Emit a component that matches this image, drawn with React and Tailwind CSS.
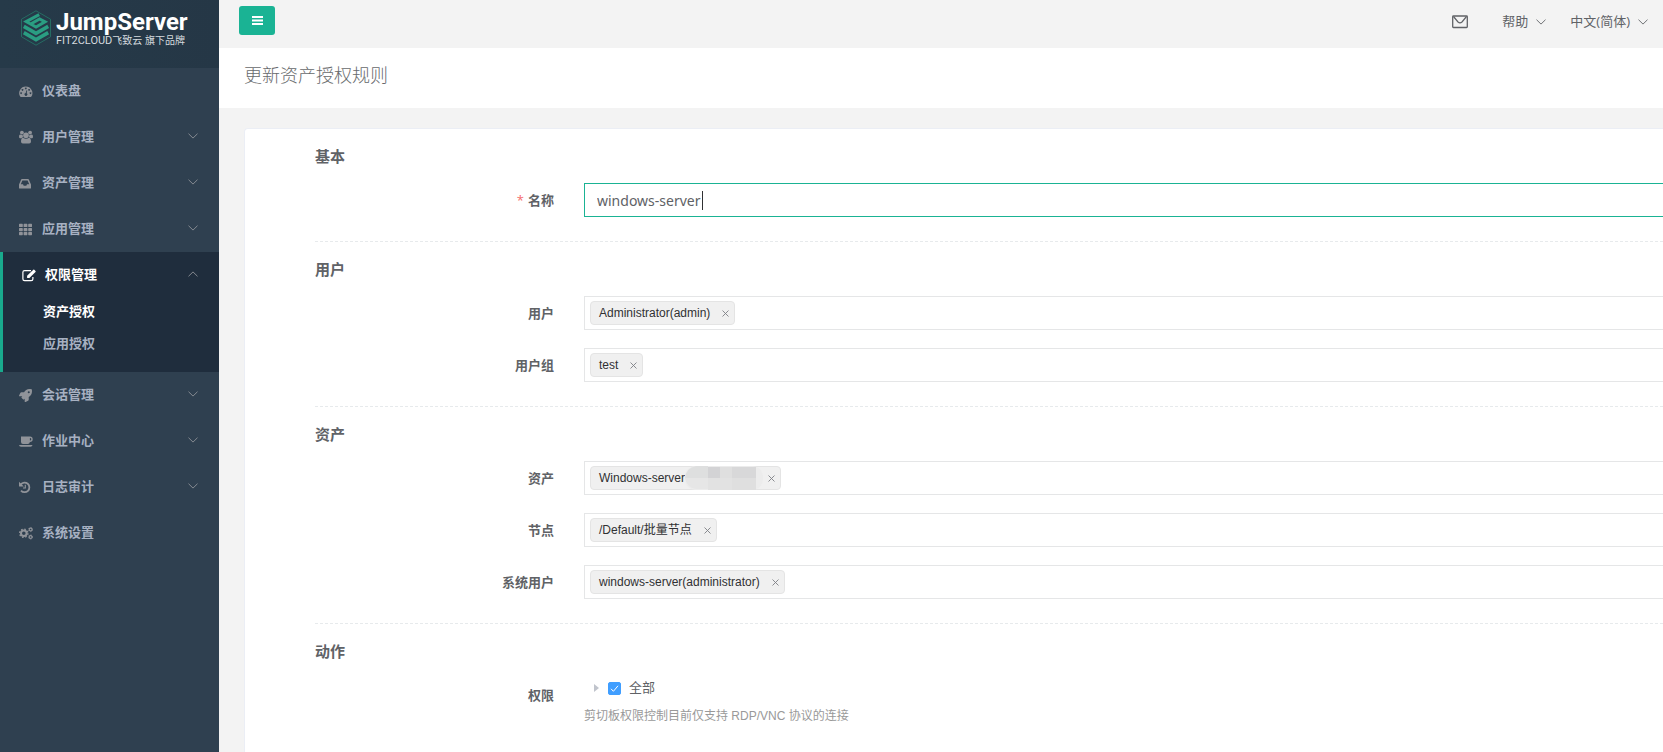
import React, { useState } from 'react';
import { FaTh, FaRocket } from 'react-icons/fa';

const Glyph = ({ className = '', children }) => (
  <svg viewBox="0 0 14 14" className={`w-[14px] h-[14px] ${className}`} fill="currentColor">
    {children}
  </svg>
);

const DashboardIcon = ({ className }) => (
  <Glyph className={className}>
    <path
      fillRule="evenodd"
      d="M6.8 2.5 A6.6 6.6 0 0 0 1.2 12.6 Q1.4 13 1.8 13 H11.8 Q12.2 13 12.4 12.6 A6.6 6.6 0 0 0 6.8 2.5 Z
        M2.1 8.2 a0.9 0.9 0 1 0 0.01 0 Z M3.5 4.9 a0.9 0.9 0 1 0 0.01 0 Z M6.8 3.4 a0.9 0.9 0 1 0 0.01 0 Z
        M10.1 4.9 a0.9 0.9 0 1 0 0.01 0 Z M11.5 8.2 a0.9 0.9 0 1 0 0.01 0 Z
        M7.5 6.2 L8.2 6.4 L7.7 9.2 A1.4 1.4 0 1 1 6.7 9 Z"
    />
  </Glyph>
);

const GroupIcon = ({ className }) => (
  <Glyph className={className}>
    <circle cx="2.9" cy="2.6" r="1.9" />
    <circle cx="11.1" cy="2.6" r="1.9" />
    <path d="M0 6.8 Q0 4.6 1.2 4.6 Q3 5.4 3.6 4.9 Q3.6 6.4 4.4 7.2 Q3 7.3 2.4 8.3 H1.2 Q0 8.3 0 6.8 Z" />
    <path d="M14 6.8 Q14 4.6 12.8 4.6 Q11 5.4 10.4 4.9 Q10.4 6.4 9.6 7.2 Q11 7.3 11.6 8.3 H12.8 Q14 8.3 14 6.8 Z" />
    <circle cx="7" cy="5.2" r="2.8" />
    <path d="M2 11.6 Q2 7.8 4.1 7.8 Q7 9.8 9.9 7.8 Q12 7.8 12 11.6 Q12 13.5 10.2 13.5 H3.8 Q2 13.5 2 11.6 Z" />
  </Glyph>
);

const InboxIcon = ({ className }) => (
  <Glyph className={className}>
    <path
      fillRule="evenodd"
      d="M2.9 3 H9.1 Q9.6 3 9.8 3.5 L12 8.6 V12 Q12 12.6 11.4 12.6 H0.6 Q0 12.6 0 12 V8.6 L2.2 3.5 Q2.4 3 2.9 3 Z
        M3.4 4.4 L1.8 8.3 H4 L4.7 9.8 H7.3 L8 8.3 H10.2 L8.6 4.4 Z"
    />
  </Glyph>
);

const EditIcon = ({ className }) => (
  <Glyph className={className}>
    <path
      d="M9 2.6 H2.6 Q0.9 2.6 0.9 4.3 V10.9 Q0.9 12.6 2.6 12.6 H9.2 Q10.9 12.6 10.9 10.9 V9"
      fill="none"
      stroke="currentColor"
      strokeWidth="1.2"
    />
    <path d="M11.3 1.7 Q11.8 1.2 12.3 1.7 L13.5 2.9 Q14 3.4 13.5 3.9 L7.4 10 H5.1 V7.8 Z" />
  </Glyph>
);

const CoffeeIcon = ({ className }) => (
  <Glyph className={className}>
    <path
      fillRule="evenodd"
      d="M2 2.5 H11 Q13.7 2.7 13.7 5.2 Q13.7 7.9 10.9 7.9 Q10.6 9.9 8.8 9.9 H4 Q2 9.9 2 7.9 Z
        M10.9 4 V6.6 Q12.3 6.6 12.3 5.2 Q12.3 4 10.9 4 Z"
    />
    <path d="M0 11 H13.5 Q13.3 12.7 11.5 12.7 H2 Q0.2 12.7 0 11 Z" />
  </Glyph>
);

const HistoryIcon = ({ className }) => (
  <Glyph className={className}>
    <path d="M1.8 4.4 A4.8 4.8 0 1 1 2 10.6" fill="none" stroke="currentColor" strokeWidth="1.8" />
    <path d="M0 1.8 L4.8 6.4 H0.5 Q0 6.4 0 5.9 Z" />
    <path d="M6.3 4.8 V8 H4" fill="none" stroke="currentColor" strokeWidth="1.1" />
  </Glyph>
);

// The dashed outer ring forms the teeth of each gear
const CogsIcon = ({ className }) => (
  <Glyph className={className}>
    <g fill="none" stroke="currentColor">
      <circle cx="4.8" cy="7.3" r="2.8" strokeWidth="2" />
      <circle cx="4.8" cy="7.3" r="4.1" strokeWidth="1.4" strokeDasharray="1.61 1.61" />
      <circle cx="11.6" cy="3.5" r="1.4" strokeWidth="1.1" />
      <circle cx="11.6" cy="3.5" r="2.1" strokeWidth="0.8" strokeDasharray="1.1 1.1" />
      <circle cx="11.6" cy="11" r="1.4" strokeWidth="1.1" />
      <circle cx="11.6" cy="11" r="2.1" strokeWidth="0.8" strokeDasharray="1.1 1.1" />
    </g>
  </Glyph>
);

const menuItems = [
  { label: '仪表盘', icon: DashboardIcon },
  { label: '用户管理', icon: GroupIcon, expandable: true },
  { label: '资产管理', icon: InboxIcon, expandable: true },
  { label: '应用管理', icon: FaTh, expandable: true },
  {
    label: '权限管理',
    icon: EditIcon,
    expandable: true,
    children: ['资产授权', '应用授权'],
  },
  { label: '会话管理', icon: FaRocket, expandable: true },
  { label: '作业中心', icon: CoffeeIcon, expandable: true },
  { label: '日志审计', icon: HistoryIcon, expandable: true },
  { label: '系统设置', icon: CogsIcon },
];

const Chevron = ({ up = false, className = '' }) => (
  <svg
    viewBox="0 0 10 6"
    className={`w-[10px] h-[6px] shrink-0 ${up ? 'rotate-180' : ''} ${className}`}
    fill="none"
    stroke="currentColor"
    strokeWidth="0.9"
  >
    <path d="M0.5 0.7 L5 5.1 L9.5 0.7" />
  </svg>
);

const Logo = () => (
  <a
    href="#home"
    className="h-[68px] flex items-start pl-[21px] pt-[10px] gap-[5px] bg-linear-to-r from-[#263a49] to-[#253746] text-white"
  >
    <svg viewBox="0 0 30 36" className="w-[30px] h-9 shrink-0" fill="none">
      <path d="M15 0.8 L29.5 9.2 V26.8 L15 35.2 L0.5 26.8 V9.2 Z" stroke="#25836f" strokeWidth="0.7" />
      <g stroke="#2a9d82" strokeWidth="3">
        <path d="M18.2 4.6 L5.2 11.6 L9.6 14 L18.6 9 L24 11.8 L15 17 L9.6 14" />
        <path d="M2.8 16.4 L15 23.4 L27.2 16.4" strokeWidth="3.6" />
        <path d="M2.8 22.6 L15 29.6 L27.2 22.6" strokeWidth="3.6" />
      </g>
    </svg>
    <span className="flex flex-col whitespace-nowrap">
      <span className="font-['Roboto',sans-serif] font-bold text-2xl leading-6">JumpServer</span>
      <span className="text-[10px] leading-[14px] text-[#d5dbdf] font-['Liberation_Sans','Noto_Sans_CJK_SC',sans-serif]">
        <span className="font-['Roboto',sans-serif] text-[11px]">FIT2CLOUD</span>飞致云 旗下品牌
      </span>
    </span>
  </a>
);

const MenuItem = ({ item }) => {
  const Icon = item.icon;
  const active = Boolean(item.children);

  return (
    <li className={active ? 'bg-[#1f2d3d] border-l-[3px] border-[#19aa8d] pb-[14px]' : ''}>
      <a
        href="#menu"
        className={`h-[46px] flex items-center pl-[19px] pr-[21px] font-semibold ${active ? 'text-white' : 'text-[#a7b1c2]'}`}
      >
        <span className="w-[14px] mr-[9px]">
          <Icon size={13} className={active ? 'text-white' : 'text-[#909399]'} />
        </span>
        <span className="flex-1">{item.label}</span>
        {item.expandable && <Chevron up={active} className="mb-[2px] text-[#909399]" />}
      </a>
      {active && (
        <ul className="flex flex-col gap-1">
          {item.children.map((child, i) => (
            <li key={child}>
              <a
                href="#submenu"
                className={`h-7 flex items-center pl-10 font-semibold ${i === 0 ? 'text-white' : 'text-[#a7b1c2]'}`}
              >
                {child}
              </a>
            </li>
          ))}
        </ul>
      )}
    </li>
  );
};

const TopBar = () => (
  <header className="h-12 bg-[#f3f3f3] flex items-start justify-between pl-5 pr-[15px] text-[#606266]">
    <button
      type="button"
      aria-label="菜单"
      className="mt-[6px] w-9 h-[29px] rounded-[3px] bg-[#1ab394] text-white flex items-center justify-center"
    >
      <svg viewBox="0 0 11 9" className="w-[11px] h-[9px]" fill="currentColor">
        <path d="M0 0h11v2H0z M0 3.5h11v2H0z M0 7h11v2H0z" />
      </svg>
    </button>
    <nav className="h-11 flex items-center">
      <a href="#messages" aria-label="消息" className="mr-[34px]">
        <svg viewBox="0 0 16 14" className="w-4 h-[14px]" fill="none" stroke="currentColor">
          <rect x="0.7" y="1" width="14.6" height="11.5" rx="0.8" strokeWidth="1.3" />
          <path d="M1.5 1.5 L6 7 Q8 8.6 10 7 L14.5 1.5" strokeWidth="1.2" />
        </svg>
      </a>
      <button type="button" className="flex items-center gap-2 mr-6">
        帮助
        <Chevron />
      </button>
      <button type="button" className="flex items-center gap-2">
        中文(简体)
        <Chevron />
      </button>
    </nav>
  </header>
);

const Section = ({ title, last = false, children }) => (
  <section className={`pt-[17px] ${last ? '' : 'pb-[6px] border-b border-dashed border-[#e7eaec]'}`}>
    <h3 className="text-[15px] leading-5 mb-[17px] font-semibold">{title}</h3>
    {children}
  </section>
);

const Field = ({ label, htmlFor, required = false, children }) => (
  <div className="flex mb-[18px]">
    <label htmlFor={htmlFor} className="w-[269px] shrink-0 pr-[30px] h-[34px] leading-[34px] text-right font-semibold">
      {required && <span className="text-[#f56c6c] font-normal mr-1">*</span>}
      {label}
    </label>
    <div className="flex-1">{children}</div>
  </div>
);

const TagSelect = ({ id, tag, masked = false }) => {
  const [tags, setTags] = useState([tag]);

  return (
    <div className="h-[34px] border border-r-0 border-[#e5e6e7] flex items-center pl-[5px]">
      {tags.map((t) => (
        <span
          key={t}
          className="h-6 flex items-center border border-[#e4e4e4] bg-[#f0f0f0] rounded-[4px] pl-2 pr-1 text-xs text-[#303133] font-['Liberation_Sans','Noto_Sans_CJK_SC',sans-serif]"
        >
          {t}
          {masked && <Mosaic />}
          <button
            type="button"
            aria-label={`移除 ${t}`}
            className={`h-4 w-[9px] flex items-center justify-center text-[#7d7f84] ${masked ? 'ml-1' : 'ml-[11px]'}`}
            onClick={() => setTags(tags.filter((x) => x !== t))}
          >
            <svg viewBox="0 0 7 7" className="w-[7px] h-[7px]" stroke="currentColor" strokeWidth="0.9">
              <path d="M0.5 0.5 L6.5 6.5 M6.5 0.5 L0.5 6.5" />
            </svg>
          </button>
        </span>
      ))}
      <input id={id} type="text" className="flex-1 h-full px-2 outline-none bg-transparent" />
    </div>
  );
};

// Pixelated patch hiding the address part of the asset name
const Mosaic = () => (
  <svg viewBox="0 0 78 24" className="w-[78px] h-6 shrink-0">
    <rect width="78" height="24" rx="11" fill="#ececec" />
    <path d="M11 0 H23 V12 H0 Q1 2 11 0 Z" fill="#dedfdf" />
    <rect x="23" y="1" width="12" height="11" fill="#d3d3d5" />
    <rect x="35" y="1" width="12" height="11" fill="#dfdfdf" />
    <rect x="47" y="1" width="24" height="11" fill="#d8d8d9" />
    <path d="M0 12 H23 V23 H11 Q2 22 0 12 Z" fill="#e6e6e6" />
    <rect x="23" y="12" width="24" height="12" fill="#e2e2e2" />
    <rect x="47" y="12" width="24" height="12" fill="#dfdfdf" />
  </svg>
);

const App = () => {
  const [name, setName] = useState('windows-server');
  const [allActions, setAllActions] = useState(true);

  return (
    <div className="min-h-screen flex overflow-hidden bg-[#f3f3f3] text-[13px] text-[#606266] font-['Open_Sans','Noto_Sans_CJK_SC',sans-serif]">
      <aside className="w-[219px] shrink-0 bg-[#2f4050]">
        <Logo />
        <ul>
          {menuItems.map((item) => (
            <MenuItem key={item.label} item={item} />
          ))}
        </ul>
      </aside>

      <div className="flex-1 min-w-0 flex flex-col">
        <TopBar />
        <div className="h-[60px] bg-white flex items-center pl-[25px] pb-[6px]">
          <h1 className="text-lg leading-6 font-light text-[#676a6c]">更新资产授权规则</h1>
        </div>

        <main className="flex-1 flex flex-col pl-[25px] pt-5">
          <form className="flex-1 bg-white border border-r-0 border-b-0 border-[#ebeef5] rounded-tl-[4px] pl-[70px]">
            <Section title="基本">
              <Field label="名称" htmlFor="name" required>
                <div className="relative">
                  <input
                    id="name"
                    type="text"
                    value={name}
                    onChange={(e) => setName(e.target.value)}
                    className="block w-full h-[34px] border border-r-0 border-[#1ab394] px-3 text-sm outline-none font-['Noto_Sans',sans-serif]"
                  />
                  <span className="absolute left-[118px] top-2 w-px h-[19px] bg-[#303133]" />
                </div>
              </Field>
            </Section>

            <Section title="用户">
              <Field label="用户" htmlFor="users">
                <TagSelect id="users" tag="Administrator(admin)" />
              </Field>
              <Field label="用户组" htmlFor="groups">
                <TagSelect id="groups" tag="test" />
              </Field>
            </Section>

            <Section title="资产">
              <Field label="资产" htmlFor="assets">
                <TagSelect id="assets" tag="Windows-server" masked />
              </Field>
              <Field label="节点" htmlFor="nodes">
                <TagSelect id="nodes" tag="/Default/批量节点" />
              </Field>
              <Field label="系统用户" htmlFor="system-users">
                <TagSelect id="system-users" tag="windows-server(administrator)" />
              </Field>
            </Section>

            <Section title="动作" last>
              <Field label="权限" htmlFor="all-actions">
                <div className="h-5 flex items-center pl-[10px]">
                  <svg viewBox="0 0 5 8" className="w-[5px] h-2 mr-[9px]" fill="#c0c4cc">
                    <path d="M0 0 L5 4 L0 8 Z" />
                  </svg>
                  <span className="relative flex mr-2">
                    <input
                      id="all-actions"
                      type="checkbox"
                      checked={allActions}
                      onChange={(e) => setAllActions(e.target.checked)}
                      className="appearance-none w-[13px] h-[13px] rounded-[2px] border border-[#dcdfe6] checked:bg-[#409eff] checked:border-[#409eff]"
                    />
                    {allActions && (
                      <svg
                        viewBox="0 0 13 13"
                        className="absolute inset-0 w-[13px] h-[13px] pointer-events-none"
                        fill="none"
                        stroke="#fff"
                      >
                        <path d="M3 6.8 L5.4 9.3 L10 3.8" />
                      </svg>
                    )}
                  </span>
                  <label htmlFor="all-actions">全部</label>
                </div>
                <p className="mt-2 text-xs leading-5 text-[#999] font-['Liberation_Sans','Noto_Sans_CJK_SC',sans-serif]">
                  剪切板权限控制目前仅支持 RDP/VNC 协议的连接
                </p>
              </Field>
            </Section>
          </form>
        </main>
      </div>
    </div>
  );
};

export default App;
